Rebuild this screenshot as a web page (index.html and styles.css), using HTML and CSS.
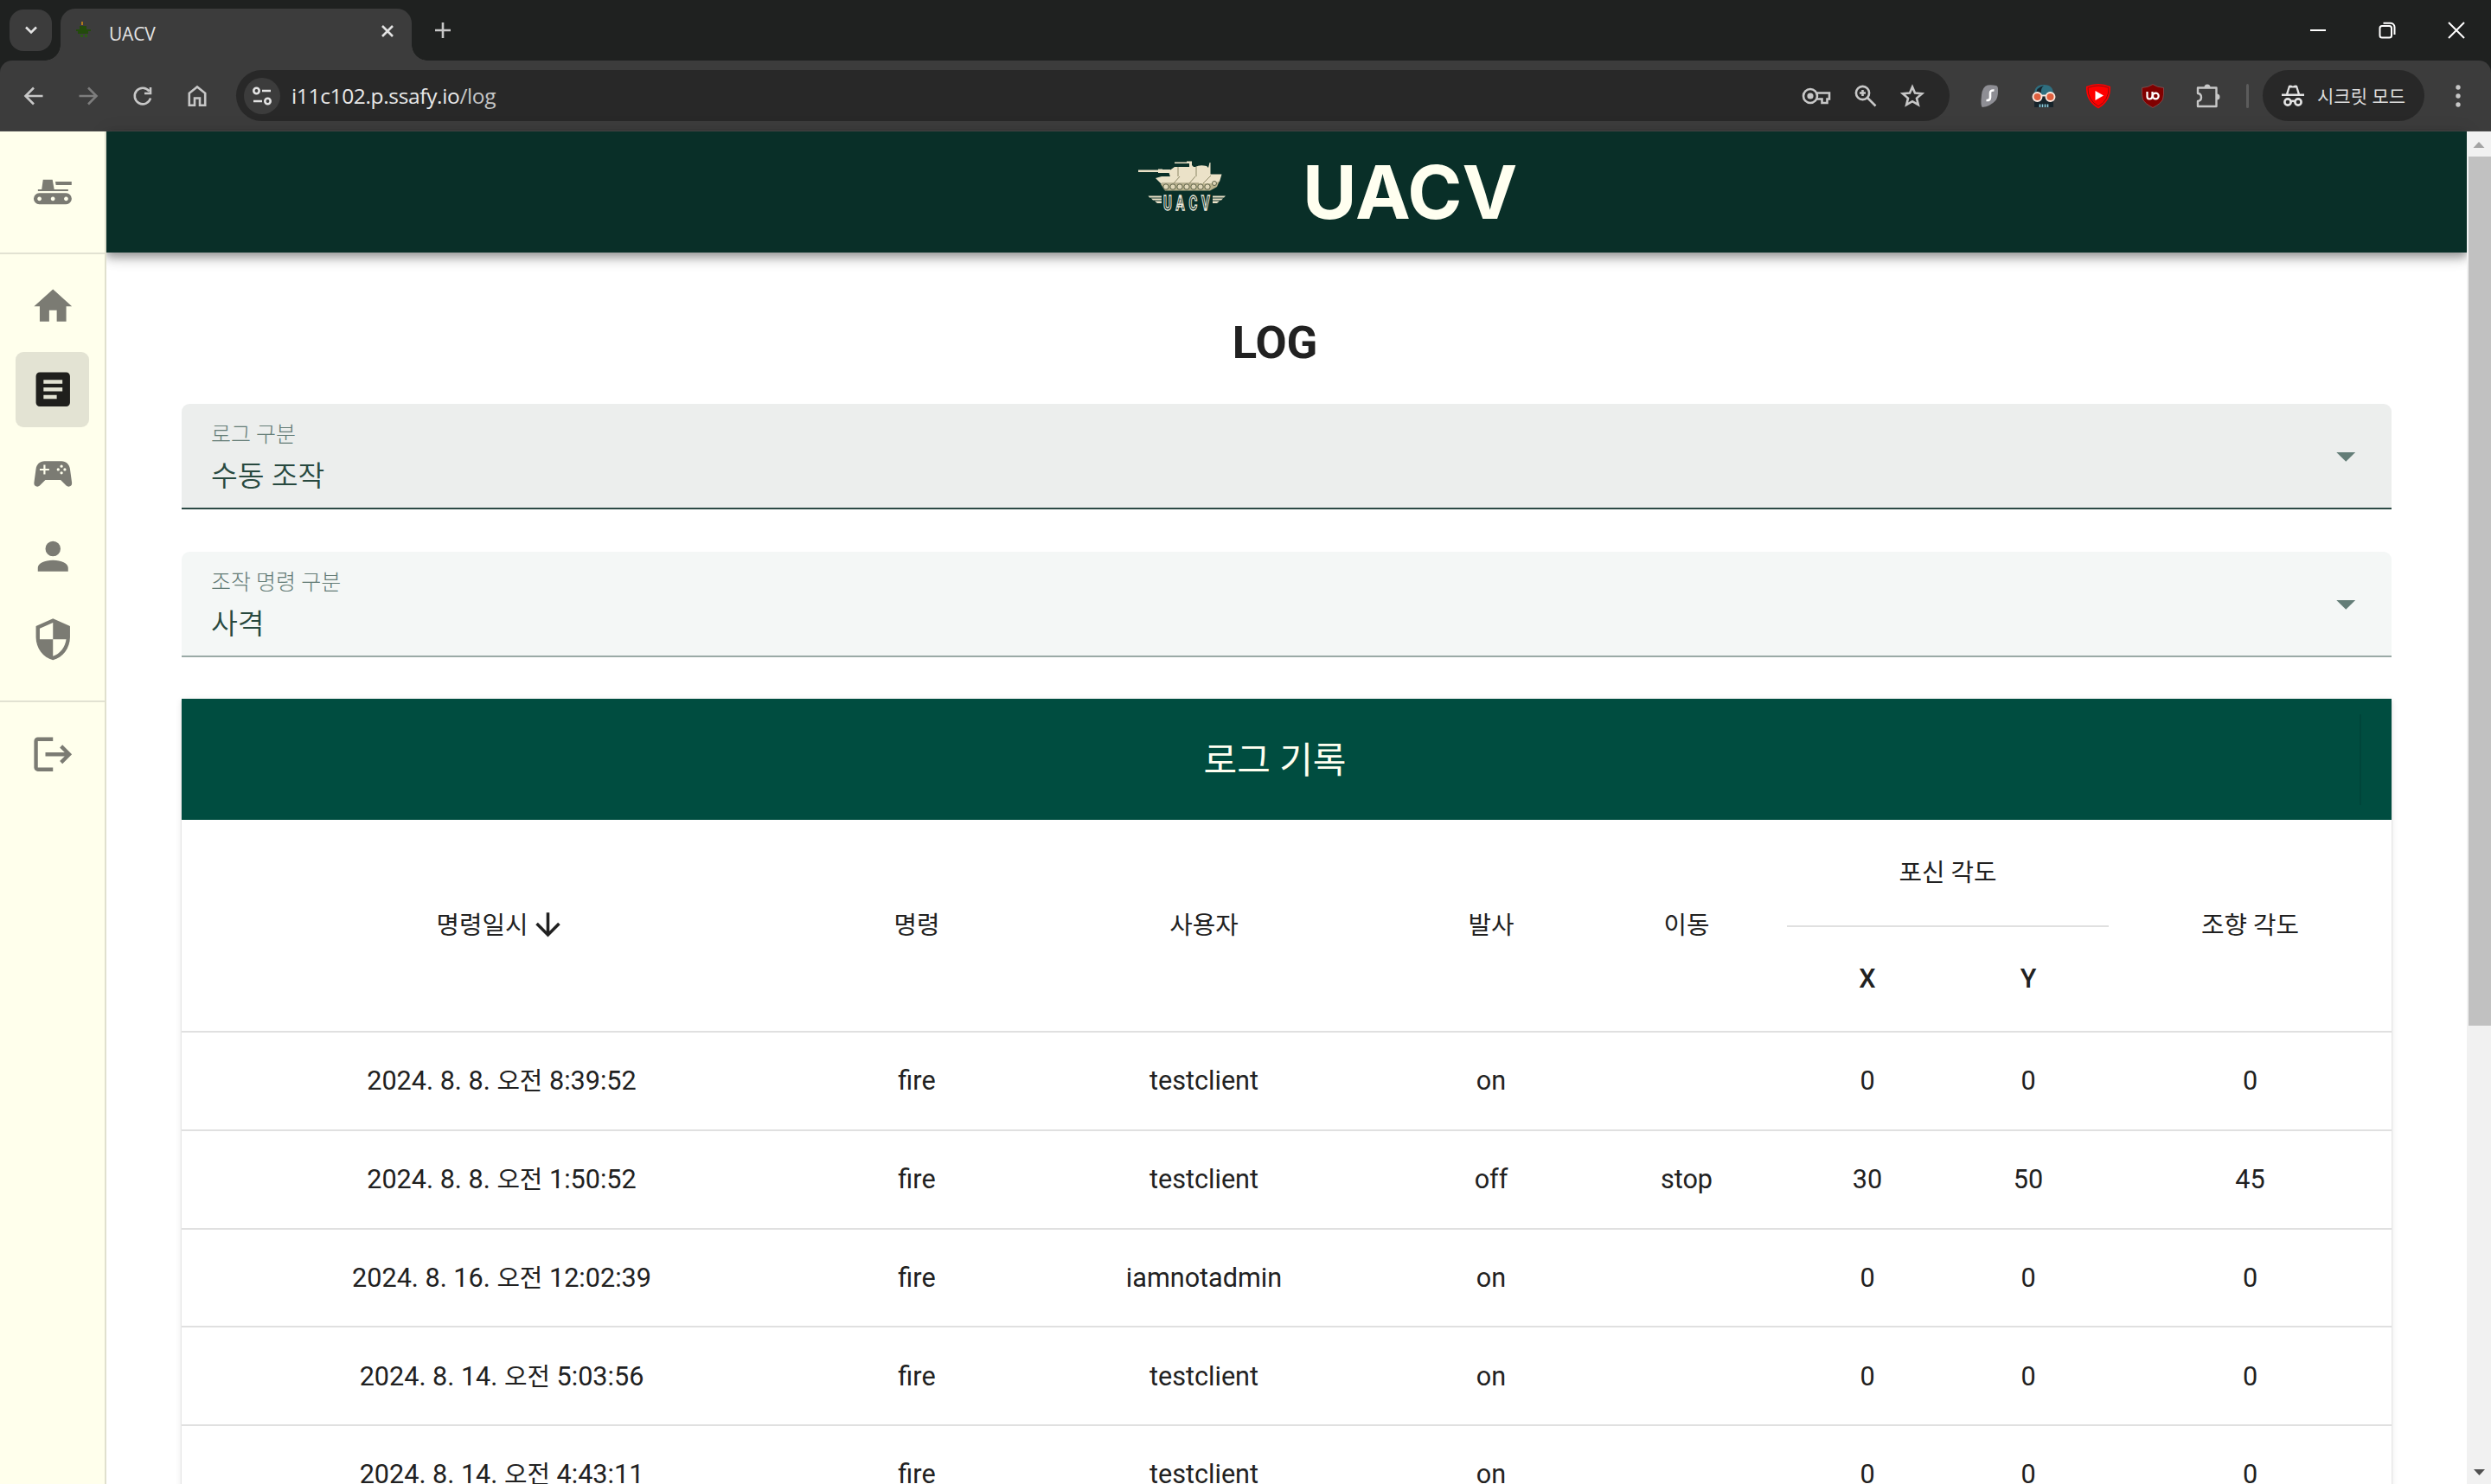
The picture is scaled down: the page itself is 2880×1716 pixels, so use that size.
FILE: index.html
```html
<!DOCTYPE html>
<html lang="ko">
<head>
<meta charset="utf-8">
<title>UACV</title>
<link rel="stylesheet" href="styles.css">
</head>
<body>
<div class="browser">
  <div class="tabstrip">
    <div class="tab-search"><svg width="14" height="14" viewBox="0 0 14 14"><path class="ln" d="M1 3.500L7 9.500L13 3.500"/></svg></div>
    <div class="tab">
      <svg class="favicon" width="20" height="20" viewBox="0 0 20 20"><path fill="#234b0c" d="M5 5h8v4h5v2h-3v3H3v-3H1V9h4z"/><path fill="#2c5a16" d="M6 15h3v3H6zM11 15h3v3h-3z"/><path fill="#b37a1c" d="M7 0h2v4H7z"/></svg>
      <span class="tab-title">UACV</span>
      <svg class="tab-close" width="14" height="14" viewBox="0 0 14 14"><path class="ln" d="M1 1L13 13M13 1L1 13"/></svg>
    </div>
    <svg class="new-tab" width="18" height="18" viewBox="0 0 18 18"><path class="ln dim" d="M9 0V18M0 9H18"/></svg>
    <div class="win">
      <svg width="20" height="20" viewBox="0 0 20 20"><path class="ln w" d="M1 10H19"/></svg>
      <svg width="20" height="20" viewBox="0 0 20 20"><rect class="ln w" x="1.500" y="5" width="13.500" height="13.500" rx="2.500"/><path class="ln w" d="M5.500 1.800H14a4.500 4.500 0 0 1 4.500 4.500V15"/></svg>
      <svg width="20" height="20" viewBox="0 0 20 20"><path class="ln w" d="M1 1L19 19M19 1L1 19"/></svg>
    </div>
  </div>
  <div class="toolbar">
    <div class="nav">
      <svg width="24" height="24" viewBox="0 0 24 24"><path class="ln g" d="M22.500 12H3M12 2.500L2.500 12L12 21.500"/></svg>
      <svg width="24" height="24" viewBox="0 0 24 24"><path class="ln off" d="M1.500 12H21M12 2.500L21.500 12L12 21.500"/></svg>
      <svg width="24" height="24" viewBox="0 0 24 24"><path class="ln g" d="M21 14.500A9.300 9.300 0 1 1 19.500 6.500M21 2V9H14"/></svg>
      <svg width="24" height="26" viewBox="0 0 24 26"><path class="ln g" d="M2.800 23.700V9.800L12 2.500L21.200 9.800V23.700H15V15.500H9V23.700Z"/></svg>
    </div>
    <div class="omnibox">
      <div class="site"><svg width="24" height="24" viewBox="0 0 24 24"><g class="ln"><circle cx="5.500" cy="6" r="3.200"/><path d="M12 6H22M2 18H12"/><circle cx="18.500" cy="18" r="3.200"/></g></svg></div>
      <span class="url">i11c102.p.ssafy.io<span class="path">/log</span></span>
      <div class="omni-icons">
        <svg width="34" height="24" viewBox="0 0 34 24"><g class="ln g"><circle cx="10" cy="12" r="8"/><path d="M17.500 8.500H32V15.500H29.500V20H23.500V15.500H17.500"/></g><circle cx="10" cy="12" r="3.600" fill="#c7c7c7"/></svg>
        <svg width="26" height="26" viewBox="0 0 26 26"><g class="ln g"><circle cx="9.500" cy="9.500" r="7.600"/><path d="M15 15L24.500 24.500M9.500 6V13M6 9.500H13"/></g></svg>
        <svg width="28" height="28" viewBox="0 0 28 28"><path class="ln g" d="M14 3.500L17 10.500L25 11.300L19 16.600L20.800 24.200L14 20.200L7.200 24.200L9 16.600L3 11.300L11 10.500Z"/></svg>
      </div>
    </div>
    <div class="exts">
      <svg width="30" height="30" viewBox="0 0 30 30"><path fill="#8e8e94" d="M13 2.500Q18 2 23 3Q25.500 3.500 25 10Q25 17 22 20.500Q16 27 7 28Q4.500 27 6 14Q7 4 13 2.500Z"/><path fill="none" stroke="#fff" stroke-width="2.600" d="M20.500 8.500Q16 8 16 11.500V16.500Q16 20.500 11.500 20"/></svg>
      <svg width="30" height="30" viewBox="0 0 30 30"><path fill="#2f6f80" d="M4 15Q3 2 15 2Q27 2 26 15Z"/><path fill="#17242b" d="M15 3Q6 5 6 13H12Q11 6 15 3Z"/><path fill="#17242b" d="M4 15H26V28H4Z"/><circle cx="7.500" cy="16" r="5" fill="#e0603f" stroke="#fbe9df" stroke-width="1.900"/><circle cx="22.500" cy="16" r="5" fill="#e0603f" stroke="#fbe9df" stroke-width="1.900"/><path stroke="#fbe9df" stroke-width="1.900" d="M12.500 14.500H17.500"/><path stroke="#8ed0e0" stroke-width="1.600" d="M10.500 24.500V28M13.500 24.500V28M16.500 24.500V28M19.500 24.500V28"/></svg>
      <svg width="30" height="30" viewBox="0 0 30 30"><path fill="#fe0000" d="M15 1Q22 1.200 29 4Q30 21 15 29.500Q0 21 1 4Q8 1.200 15 1Z"/><path fill="none" stroke="#8d1010" d="M15 3Q21 3.200 27 5.400Q27.500 19.500 15 27Q2.500 19.500 3 5.400Q9 3.200 15 3Z"/><path fill="#fff" d="M11.500 9L21 14.500L11.500 20Z"/></svg>
      <svg width="30" height="30" viewBox="0 0 30 30"><path fill="#800000" stroke="#8a5050" stroke-width=".8" d="M15 1.500Q20 5 27.500 5.500Q28 14 26.500 19Q24 24 15 28.500Q6 24 3.500 19Q2 14 2.500 5.500Q10 5 15 1.500Z"/><path fill="none" stroke="#fff" stroke-width="2.200" d="M8.500 10V15.500Q8.500 18.500 11 18.500Q14.500 18.500 14.500 15V10"/><circle cx="18.300" cy="15" r="3.400" fill="none" stroke="#fff" stroke-width="2.200"/></svg>
      <svg width="30" height="30" viewBox="0 0 30 30"><path fill="none" stroke="#c7c7c7" stroke-width="2.400" stroke-linejoin="round" d="M4 5.500H25.500V27H4V21Q8 20.500 8 16.500Q8 12.500 4 12Z"/><path fill="#c7c7c7" d="M11.500 5a3.500 3.500 0 0 1 7 0ZM26 12.500a3.500 3.500 0 0 1 0 7Z"/></svg>
    </div>
    <div class="sep"></div>
    <div class="chip">
      <svg width="28" height="26" viewBox="0 0 28 26"><path fill="#e3e3e3" d="M9 1Q11 0 14 1.500Q17 0 19 1L22 10.500H27V13H1V10.500H6ZM10.500 3.500L8.500 10.500H19.500L17.500 3.500Z" fill-rule="evenodd"/><g fill="none" stroke="#e3e3e3" stroke-width="2.600"><circle cx="8" cy="20" r="3.600"/><circle cx="20" cy="20" r="3.600"/><path d="M11.500 19.500Q14 18 16.500 19.500"/></g></svg>
      <span>시크릿 모드</span>
    </div>
    <svg class="kebab" width="6" height="26" viewBox="0 0 6 26"><g fill="#c7c7c7"><circle cx="3" cy="3" r="2.700"/><circle cx="3" cy="13" r="2.700"/><circle cx="3" cy="23" r="2.700"/></g></svg>
  </div>
</div>

<div class="app">
  <nav class="sidebar">
    <div class="side-head"><svg class="mdi" viewBox="0 0 24 24"><path d="M7.200 5.400H12.200L13.100 10.500H20.500V11.400H4.500V10.500H6.500ZM13.700 6.400H22.300V8.200H14ZM5.200 12.500H19.400A2.950 2.950 0 0 1 19.400 18.400H5.200A2.950 2.950 0 0 1 5.200 12.500ZM5.300 14.400a1.100 1.100 0 1 0 .01 0ZM12.400 14.400a1.100 1.100 0 1 0 .01 0ZM19.400 14.400a1.100 1.100 0 1 0 .01 0Z" fill-rule="evenodd"/></svg></div>
    <div class="side-list">
      <div class="item"><svg class="mdi" viewBox="0 0 24 24"><path d="M10,20V14H14V20H19V12H22L12,3L2,12H5V20H10Z"/></svg></div>
      <div class="item active"><svg class="mdi" viewBox="0 0 24 24"><path d="M14,17H7V15H14M17,13H7V11H17M17,9H7V7H17M19,3H5C3.890,3 3,3.890 3,5V19A2,2 0 0,0 5,21H19A2,2 0 0,0 21,19V5C21,3.890 20.100,3 19,3Z"/></svg></div>
      <div class="item"><svg class="mdi" viewBox="0 0 24 24"><path fill-rule="evenodd" d="M7.970,16L5,19C4.670,19.300 4.230,19.500 3.750,19.500A1.750,1.750 0 0,1 2,17.750V17.500L3,10.120C3.210,7.810 5.140,6 7.500,6H16.500C18.860,6 20.790,7.810 21,10.120L22,17.500V17.750A1.750,1.750 0 0,1 20.250,19.500C19.770,19.500 19.330,19.300 19,19L16.030,16H7.970M7,8V10H5V11H7V13H8V11H10V10H8V8H7M16.500,8A0.750,0.750 0 1,0 16.500,9.500A0.750,0.750 0 1,0 16.500,8M14.750,9.750A0.750,0.750 0 1,0 14.750,11.250A0.750,0.750 0 1,0 14.750,9.750M18.250,9.750A0.750,0.750 0 1,0 18.250,11.250A0.750,0.750 0 1,0 18.250,9.750M16.500,11.500A0.750,0.750 0 1,0 16.500,13A0.750,0.750 0 1,0 16.500,11.500Z"/></svg></div>
      <div class="item"><svg class="mdi" viewBox="0 0 24 24"><path d="M12,4A4,4 0 0,1 16,8A4,4 0 0,1 12,12A4,4 0 0,1 8,8A4,4 0 0,1 12,4M12,14C16.420,14 20,15.790 20,18V20H4V18C4,15.790 7.580,14 12,14Z"/></svg></div>
      <div class="item"><svg class="mdi" viewBox="0 0 24 24"><path d="M12,12H19C18.470,16.110 15.720,19.780 12,20.920V12H5V6.300L12,3.190M12,1L3,5V11C3,16.550 6.840,21.730 12,23C17.160,21.730 21,16.550 21,11V5L12,1Z"/></svg></div>
    </div>
    <div class="side-list last">
      <div class="item"><svg class="mdi" viewBox="0 0 24 24"><path d="M17 7L15.590 8.410L18.170 11H8V13H18.170L15.590 15.580L17 17L22 12M4 5H12V3H4C2.900 3 2 3.900 2 5V19C2 20.100 2.900 21 4 21H12V19H4V5Z"/></svg></div>
    </div>
  </nav>

  <div class="page">
    <header class="appbar">
      <svg class="logo" width="104" height="62" viewBox="0 0 104 62">
        <g fill="#ebe2c8">
          <path d="M1 10.500H25V13H1ZM24 9.500H29V14H24ZM29 10H38V14H29ZM36 12L43 7H67Q72 4 80 6L82 8L83.500 2H84.500V16L82 17.500V18.500H38ZM43 1.500H57V0.500H63V5L65 7H60V3H43Z"/>
          <path d="M21 20L28 18H71L74 15.500H97.500L95 24L90 27H28Z"/>
          <path fill="#b9b28c" d="M27 27L90 26L95 23L92 30L84 34.500H32Z"/>
          <path d="M12.500 40.500H28V42.500H14ZM16 43.500H28V45.500H18ZM20 46.500H28V49H23ZM102 40.500H87V42.500H100ZM99 43.500H87V45.500H97ZM95 46.500H87V49H92Z"/>
        </g>
        <g fill="none" stroke="#8c8767" stroke-width="1"><path d="M47 7V18M68 7V18M49 18L42 26M67 18L60 26M85 17L76 26M28 26L71 26"/></g>
        <g fill="#e0d7b8" stroke="#5d6148"><circle cx="33" cy="30" r="3.200"/><circle cx="41" cy="30" r="3.200"/><circle cx="49" cy="30" r="3.200"/><circle cx="57" cy="30" r="3.200"/><circle cx="65" cy="30" r="3.200"/><circle cx="73" cy="30" r="3.200"/><circle cx="81" cy="30" r="3.200"/><circle cx="89" cy="26" r="2.500"/></g>
        <text class="logo-text" transform="translate(30 57) scale(.62 1)">UACV</text>
      </svg>
      <h1>UACV</h1>
    </header>
    <main>
      <h2>LOG</h2>
      <div class="select focus">
        <div class="field"><div class="label">로그 구분</div><div class="value">수동 조작</div></div>
        <svg class="mdi" viewBox="0 0 24 24"><path d="M7,10L12,15L17,10H7Z"/></svg>
      </div>
      <div class="select">
        <div class="field"><div class="label">조작 명령 구분</div><div class="value">사격</div></div>
        <svg class="mdi" viewBox="0 0 24 24"><path d="M7,10L12,15L17,10H7Z"/></svg>
      </div>
      <section class="card">
        <div class="card-title"><span>로그 기록</span><i></i></div>
        <div class="row head">
          <div><span class="ko">명령일시</span><svg class="sort" viewBox="0 0 24 24"><path d="M11,4H13V16L18.500,10.500L19.920,11.920L12,19.840L4.080,11.920L5.500,10.500L11,16V4Z"/></svg></div>
          <div class="ko">명령</div><div class="ko">사용자</div><div class="ko">발사</div><div class="ko">이동</div>
          <div class="angles"><div class="ko top">포신 각도</div><div>X</div><div>Y</div></div>
          <div class="ko">조향 각도</div>
        </div>
        <div class="row"><div>2024. 8. 8. <span class="ko">오전</span> 8:39:52</div><div>fire</div><div>testclient</div><div>on</div><div></div><div>0</div><div>0</div><div>0</div></div>
        <div class="row"><div>2024. 8. 8. <span class="ko">오전</span> 1:50:52</div><div>fire</div><div>testclient</div><div>off</div><div>stop</div><div>30</div><div>50</div><div>45</div></div>
        <div class="row"><div>2024. 8. 16. <span class="ko">오전</span> 12:02:39</div><div>fire</div><div>iamnotadmin</div><div>on</div><div></div><div>0</div><div>0</div><div>0</div></div>
        <div class="row"><div>2024. 8. 14. <span class="ko">오전</span> 5:03:56</div><div>fire</div><div>testclient</div><div>on</div><div></div><div>0</div><div>0</div><div>0</div></div>
        <div class="row"><div>2024. 8. 14. <span class="ko">오전</span> 4:43:11</div><div>fire</div><div>testclient</div><div>on</div><div></div><div>0</div><div>0</div><div>0</div></div>
      </section>
    </main>
  </div>

  <div class="scrollbar">
    <svg width="28" height="29" viewBox="0 0 28 29"><path fill="#a3a3a3" d="M7.500 19L14 12L20.500 19Z"/></svg>
    <div class="thumb"></div>
    <svg width="28" height="29" viewBox="0 0 28 29"><path fill="#505050" d="M8 12H21L14.500 19Z"/></svg>
  </div>
</div>
</body>
</html>
```
FILE: styles.css
```css
* { box-sizing: border-box; }
body {
  margin: 0;
  width: 2880px;
  height: 1716px;
  overflow: hidden;
  display: flex;
  flex-direction: column;
  background: #fff;
  color: #212121;
  font-family: Roboto, "Noto Sans CJK KR", sans-serif;
}
svg { display: block; flex: none; }

/* browser chrome */
.browser { flex: none; height: 152px; background: #1f2120; font-family: "Open Sans", "Noto Sans CJK KR", sans-serif; }
.ln { fill: none; stroke: #e3e3e3; stroke-width: 2.6; }
.ln.g { stroke: #c7c7c7; }
.ln.dim { stroke: #c7c7c7; }
.ln.off { stroke: #7d7d7d; }
.ln.w { stroke: #fff; stroke-width: 2; }
.tabstrip { height: 70px; display: flex; align-items: center; padding-left: 11px; }
.tab-search { width: 49px; height: 48px; border-radius: 16px; background: #3c3c3c; display: flex; align-items: center; justify-content: center; }
.tab {
  position: relative;
  align-self: flex-end;
  margin-left: 10px;
  width: 406px; height: 60px;
  padding: 0 21px 0 17px;
  display: flex; align-items: center;
  background: #3c3c3c;
  border-radius: 17px 17px 0 0;
}
.tab::before, .tab::after { content: ""; position: absolute; bottom: 0; width: 18px; height: 18px; }
.tab::before { left: -18px; background: radial-gradient(circle at 0 0, transparent 17.5px, #3c3c3c 18px); }
.tab::after { right: -18px; background: radial-gradient(circle at 100% 0, transparent 17.5px, #3c3c3c 18px); }
.favicon { margin-bottom: 10px; }
.tab-title { margin-left: 19px; flex: 1; font-size: 21px; color: #e3e3e3; letter-spacing: -.2px; line-height: 56px; padding-bottom: 3px; }
.tab-close { margin-bottom: 9px; }
.new-tab { margin-left: 27px; }
.win { margin-left: auto; display: flex; gap: 60px; padding-right: 30px; }
.toolbar {
  height: 82px;
  display: flex; align-items: center;
  padding-left: 27px;
  background: #3c3c3c;
  border-bottom: 1px solid #4a4a4a;
  border-radius: 14px 14px 0 0;
}
.nav { display: flex; align-items: center; gap: 39px; width: 246px; }
.omnibox { width: 1981px; height: 59px; border-radius: 30px; background: #282828; display: flex; align-items: center; padding: 0 29px 0 9px; }
.site { width: 42px; height: 42px; border-radius: 50%; background: #3c3c3c; display: flex; align-items: center; justify-content: center; }
.url { margin-left: 13px; flex: 1; font-size: 24.5px; color: #e8e8e8; letter-spacing: -.35px; }
.url .path { color: #c4c4c4; }
.omni-icons { display: flex; align-items: center; gap: 27px; }
.exts { display: flex; gap: 33px; margin-left: 31px; }
.sep { width: 3px; height: 28px; border-radius: 2px; background: #5c5c5c; margin-left: 30px; }
.chip { margin-left: 16px; width: 187px; height: 59px; border-radius: 30px; background: #282828; display: flex; align-items: center; padding-left: 21px; gap: 14px; color: #dcdcdc; font-size: 21px; letter-spacing: 0; white-space: nowrap; }
.chip span { padding-bottom: 2px; }
.kebab { margin-left: 36px; }

/* application */
.app { flex: 1; min-height: 0; display: flex; }
.mdi { width: 52.5px; height: 52.5px; fill: currentColor; }
.sidebar { width: 123px; flex: none; position: relative; z-index: 1; background: #ffffec; border-right: 2px solid #e0e0ce; color: #7b7b73; }
.side-head { height: 142px; display: flex; align-items: center; justify-content: center; border-bottom: 2px solid #e2e2d2; }
.side-list { padding: 17px 18px; display: flex; flex-direction: column; gap: 8.75px; border-bottom: 2px solid #e2e2d2; height: 518px; }
.side-list.last { border: 0; height: auto; }
.item { height: 87px; width: 85px; border-radius: 9px; display: flex; align-items: center; justify-content: center; flex: none; }
.item + .item { margin-top: .5px; }
.item .mdi { margin: 0 0 1px 2px; }
.item.active { background: #e3e3d3; color: #1f1f1c; }
.page { flex: 1; min-width: 0; }
.appbar { height: 140px; background: #092f28; display: flex; align-items: center; padding-left: 1192px; position: relative; box-shadow: 0 4px 9px rgba(0,0,0,.28), 0 9px 12px rgba(0,0,0,.14), 0 2px 22px rgba(0,0,0,.10); }
.appbar h1 { margin: 0 0 1px 87px; font: 700 85.5px/138px Inter, sans-serif; color: #fffff0; }
.logo { margin-bottom: 10px; }
.logo-text { font: 700 24px Roboto, sans-serif; letter-spacing: 8px; fill: #092f28; stroke: #e9e6da; stroke-width: 1.4px; }
main { padding: 0 87px; }
h2 { margin: 0 27px 0 0; height: 175px; padding-top: 36px; line-height: 137px; text-align: center; font-weight: 700; font-size: 52.5px; }
.select { height: 122px; margin-bottom: 49px; padding: 0 27px 0 34px; display: flex; align-items: center; justify-content: space-between; background: #f4f7f6; border-radius: 9px 9px 0 0; border-bottom: 2px solid #9aaaa6; color: #637d77; }
.select + .card { margin-top: -1px; }
.select.focus { background: #eceeed; border-bottom-color: #2c4a45; }
.field { padding-top: 9px; }
.label { font-size: 25px; line-height: 38px; font-weight: 300; color: #647c76; }
.value { font-size: 33.5px; line-height: 58px; color: #28493f; font-weight: 350; }
.card { background: #fff; box-shadow: 0 4px 2px -2px rgba(0,0,0,.2), 0 2px 2px rgba(0,0,0,.14), 0 2px 7px rgba(0,0,0,.12); }
.card-title { height: 140px; background: #004d40; color: #fffff0; display: flex; align-items: center; justify-content: center; font-size: 42px; position: relative; padding: 0 27px 6px 0; }
.card-title i { position: absolute; right: 35px; top: 18px; width: 2px; height: 105px; background: #00453a; }
.row { display: grid; grid-template-columns: 740px 220px 444px 220px 232px 186px 186px 327px; height: 113.75px; border-bottom: 2px solid #e0e0e0; font-size: 30.6px; }
.row > div { display: flex; align-items: center; justify-content: center; white-space: pre; }
.ko { font-size: 28.8px; }
.row:not(.head) .ko { padding-bottom: 4px; }
.head { height: 246px; font-weight: 500; }
.head .ko { font-weight: 400; padding-bottom: 5px; }
.sort { width: 43px; height: 43px; margin: 0 0 1px 2px; fill: #212121; }
.row > .angles { grid-column: span 2; display: grid; grid-template: 124px 118px / 1fr 1fr; align-content: start; }
.angles > div { display: flex; align-items: center; justify-content: center; height: 100%; }
.angles > .top { grid-column: span 2; border-bottom: 2px solid #e0e0e0; }
.scrollbar { width: 28px; flex: none; position: relative; z-index: 1; background: #f1f1f1; display: flex; flex-direction: column; }
.thumb { width: 26px; height: 1005px; margin-left: 2px; background: #c1c1c1; margin-bottom: auto; }
```
